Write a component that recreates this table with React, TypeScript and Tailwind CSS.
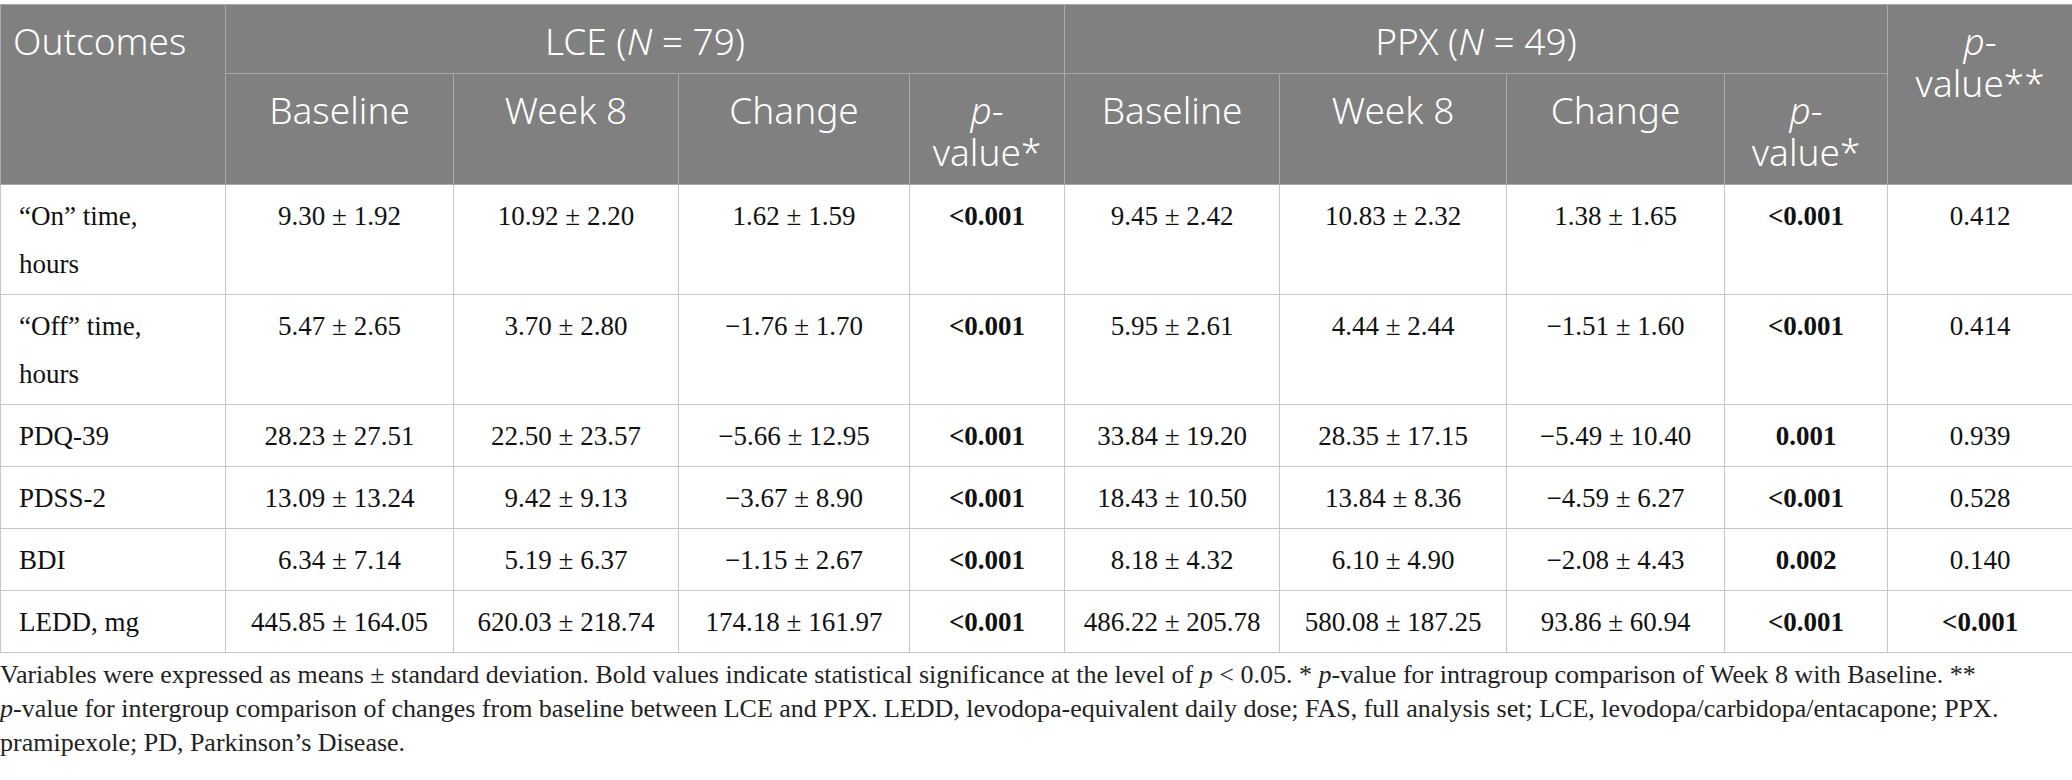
import React from "react";

type Row = { label: React.ReactNode; v: string[]; bold: number[] };

const rows: Row[] = [
  {
    label: (
      <>
        “On” time,
        <br />
        hours
      </>
    ),
    v: ["9.30 ± 1.92", "10.92 ± 2.20", "1.62 ± 1.59", "<0.001", "9.45 ± 2.42", "10.83 ± 2.32", "1.38 ± 1.65", "<0.001", "0.412"],
    bold: [3, 7],
  },
  {
    label: (
      <>
        “Off” time,
        <br />
        hours
      </>
    ),
    v: ["5.47 ± 2.65", "3.70 ± 2.80", "−1.76 ± 1.70", "<0.001", "5.95 ± 2.61", "4.44 ± 2.44", "−1.51 ± 1.60", "<0.001", "0.414"],
    bold: [3, 7],
  },
  {
    label: "PDQ-39",
    v: ["28.23 ± 27.51", "22.50 ± 23.57", "−5.66 ± 12.95", "<0.001", "33.84 ± 19.20", "28.35 ± 17.15", "−5.49 ± 10.40", "0.001", "0.939"],
    bold: [3, 7],
  },
  {
    label: "PDSS-2",
    v: ["13.09 ± 13.24", "9.42 ± 9.13", "−3.67 ± 8.90", "<0.001", "18.43 ± 10.50", "13.84 ± 8.36", "−4.59 ± 6.27", "<0.001", "0.528"],
    bold: [3, 7],
  },
  {
    label: "BDI",
    v: ["6.34 ± 7.14", "5.19 ± 6.37", "−1.15 ± 2.67", "<0.001", "8.18 ± 4.32", "6.10 ± 4.90", "−2.08 ± 4.43", "0.002", "0.140"],
    bold: [3, 7],
  },
  {
    label: "LEDD, mg",
    v: ["445.85 ± 164.05", "620.03 ± 218.74", "174.18 ± 161.97", "<0.001", "486.22 ± 205.78", "580.08 ± 187.25", "93.86 ± 60.94", "<0.001", "<0.001"],
    bold: [3, 7, 8],
  },
];

const th =
  "bg-[#808080] text-white font-light border border-[#a9a9a9] pt-[15px] pb-[11px] leading-[42px] text-[37px] align-top text-center";
const td =
  "border border-[#c6c6c6] pt-[7px] pb-[6px] leading-[48px] text-[27px] align-top text-center text-[#111]";

function PVal({ stars }: { stars: string }) {
  return (
    <>
      <i>p</i>-
      <br />
      value{stars}
    </>
  );
}

export default function App() {
  return (
    <div className="w-[2072px] bg-white pt-[4px]">
      <table
        className="w-[2072px] table-fixed border-collapse"
        style={{ fontFamily: '"Liberation Serif", serif' }}
      >
        <colgroup>
          <col className="w-[225px]" />
          <col className="w-[228px]" />
          <col className="w-[225px]" />
          <col className="w-[231px]" />
          <col className="w-[155px]" />
          <col className="w-[215px]" />
          <col className="w-[227px]" />
          <col className="w-[218px]" />
          <col className="w-[163px]" />
          <col className="w-[185px]" />
        </colgroup>
        <thead className="font-['Noto_Sans',sans-serif]">
          <tr>
            <th className={th + " !text-left pl-[12px]"} rowSpan={2}>
              Outcomes
            </th>
            <th className={th} colSpan={4}>
              LCE (<i>N</i> = 79)
            </th>
            <th className={th} colSpan={4}>
              PPX (<i>N</i> = 49)
            </th>
            <th className={th} rowSpan={2}>
              <PVal stars="**" />
            </th>
          </tr>
          <tr>
            <th className={th}>Baseline</th>
            <th className={th}>Week 8</th>
            <th className={th}>Change</th>
            <th className={th}>
              <PVal stars="*" />
            </th>
            <th className={th}>Baseline</th>
            <th className={th}>Week 8</th>
            <th className={th}>Change</th>
            <th className={th}>
              <PVal stars="*" />
            </th>
          </tr>
        </thead>
        <tbody>
          {rows.map((r, i) => (
            <tr key={i}>
              <td className={td + " !text-left pl-[18px]"}>{r.label}</td>
              {r.v.map((v, j) => (
                <td key={j} className={td + (r.bold.includes(j) ? " font-bold" : "")}>
                  {v}
                </td>
              ))}
            </tr>
          ))}
        </tbody>
      </table>
      <div
        className="mt-[5px] text-[26px] leading-[34px] text-[#222] whitespace-nowrap"
        style={{ fontFamily: '"Liberation Serif", serif' }}
      >
        <div>
          Variables were expressed as means ± standard deviation. Bold values indicate statistical significance at the level
          of <i>p</i> &lt; 0.05. * <i>p</i>-value for intragroup comparison of Week 8 with Baseline. **
        </div>
        <div>
          <i>p</i>-value for intergroup comparison of changes from baseline between LCE and PPX. LEDD, levodopa-equivalent
          daily dose; FAS, full analysis set; LCE, levodopa/carbidopa/entacapone; PPX.
        </div>
        <div>pramipexole; PD, Parkinson’s Disease.</div>
      </div>
    </div>
  );
}
